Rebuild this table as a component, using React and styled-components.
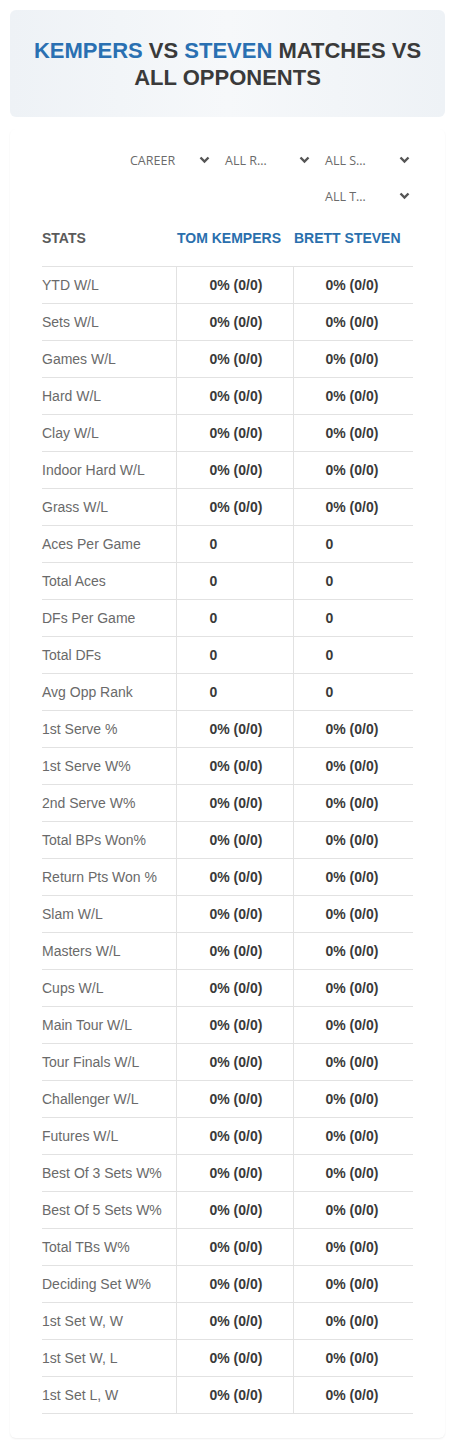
import React from 'react';
import styled, { createGlobalStyle } from 'styled-components';

const GlobalStyle = createGlobalStyle`
  body {
    margin: 0;
    background: #fff;
    font-family: "Liberation Sans", Arial, sans-serif;
  }
`;

const Page = styled.div`
  padding: 10px;
`;

const TitleCard = styled.div`
  height: 107px;
  box-sizing: border-box;
  padding: 27px 16px 0;
  border-radius: 6px;
  background: linear-gradient(90deg, #eef2f6 0%, #f6f8fa 50%, #eef2f6 100%);
  text-align: center;
`;

const Title = styled.h1`
  margin: 0;
  font-family: "Liberation Sans", Arial, sans-serif;
  font-size: 22px;
  line-height: 27px;
  font-weight: 700;
  color: #3a3a3a;
  text-transform: uppercase;
`;

const Name = styled.span`
  color: #2a70b2;
`;

const StatsCard = styled.div`
  margin-top: 12px;
  padding: 13px 32px 24px;
  background: #fff;
  border-radius: 6px;
  box-shadow: 0 1px 2px rgba(0, 0, 0, 0.07);
`;

const Filters = styled.div`
  display: flex;
  flex-wrap: wrap;
  justify-content: flex-end;
`;

const Select = styled.div`
  width: 100px;
  height: 36px;
  box-sizing: border-box;
  display: flex;
  align-items: center;
  justify-content: space-between;
  padding: 0 3px 0 ${(p) => p.$indent}px;
  font-family: "Open Sans", sans-serif;
  font-size: 12.5px;
  color: #6b6b6b;
`;

const Table = styled.table`
  width: 100%;
  border-collapse: collapse;
  table-layout: fixed;
  font-family: "Liberation Sans", Arial, sans-serif;
  font-size: 14px;
`;

const HeadCell = styled.th`
  height: 48px;
  padding: 0 0 4px ${(p) => (p.$first ? 0 : 1)}px;
  text-align: left;
  font-family: "Liberation Sans", Arial, sans-serif;
  font-size: 14px;
  font-weight: 700;
  color: ${(p) => (p.$first ? '#5a5a5a' : '#2a6fad')};
  border-bottom: 1px solid #e2e2e2;
  white-space: nowrap;
`;

const Label = styled.td`
  height: 36px;
  padding: 0;
  font-family: "Liberation Sans", Arial, sans-serif;
  font-size: 14px;
  color: #6a6a6a;
  border-bottom: 1px solid #e2e2e2;
`;

const Value = styled.td`
  height: 36px;
  padding: 0 0 0 ${(p) => p.$pad}px;
  font-family: "Liberation Sans", Arial, sans-serif;
  font-size: 14px;
  font-weight: 700;
  color: #3a3a3a;
  border-bottom: 1px solid #e2e2e2;
  border-left: 1px solid #e2e2e2;
`;

const Chevron = () => (
  <svg width="11" height="8" viewBox="0 0 11 8">
    <polyline points="1.5,1.5 5.5,5.5 9.5,1.5" fill="none" stroke="#555" strokeWidth="2.4" />
  </svg>
);

const filters = [
  { label: 'CAREER', indent: 17 },
  { label: 'ALL R…', indent: 12 },
  { label: 'ALL S…', indent: 12 },
  { label: 'ALL T…', indent: 12 },
];

const pct = '0% (0/0)';

const stats = [
  ['YTD W/L', pct], ['Sets W/L', pct], ['Games W/L', pct], ['Hard W/L', pct],
  ['Clay W/L', pct], ['Indoor Hard W/L', pct], ['Grass W/L', pct],
  ['Aces Per Game', '0'], ['Total Aces', '0'], ['DFs Per Game', '0'],
  ['Total DFs', '0'], ['Avg Opp Rank', '0'],
  ['1st Serve %', pct], ['1st Serve W%', pct], ['2nd Serve W%', pct],
  ['Total BPs Won%', pct], ['Return Pts Won %', pct], ['Slam W/L', pct],
  ['Masters W/L', pct], ['Cups W/L', pct], ['Main Tour W/L', pct],
  ['Tour Finals W/L', pct], ['Challenger W/L', pct], ['Futures W/L', pct],
  ['Best Of 3 Sets W%', pct], ['Best Of 5 Sets W%', pct], ['Total TBs W%', pct],
  ['Deciding Set W%', pct], ['1st Set W, W', pct], ['1st Set W, L', pct],
  ['1st Set L, W', pct],
];

export default function App() {
  return (
    <Page>
      <GlobalStyle />
      <TitleCard>
        <Title>
          <Name>Kempers</Name> vs <Name>Steven</Name> matches vs all opponents
        </Title>
      </TitleCard>

      <StatsCard>
        <Filters>
          {filters.map((f) => (
            <Select key={f.label} $indent={f.indent}>
              <span>{f.label}</span>
              <Chevron />
            </Select>
          ))}
        </Filters>

        <Table>
          <colgroup>
            <col style={{ width: 134 }} />
            <col style={{ width: 117 }} />
            <col />
          </colgroup>
          <thead>
            <tr>
              <HeadCell $first>STATS</HeadCell>
              <HeadCell>TOM KEMPERS</HeadCell>
              <HeadCell>BRETT STEVEN</HeadCell>
            </tr>
          </thead>
          <tbody>
            {stats.map(([label, value]) => (
              <tr key={label}>
                <Label>{label}</Label>
                <Value $pad={33}>{value}</Value>
                <Value $pad={32}>{value}</Value>
              </tr>
            ))}
          </tbody>
        </Table>
      </StatsCard>
    </Page>
  );
}
